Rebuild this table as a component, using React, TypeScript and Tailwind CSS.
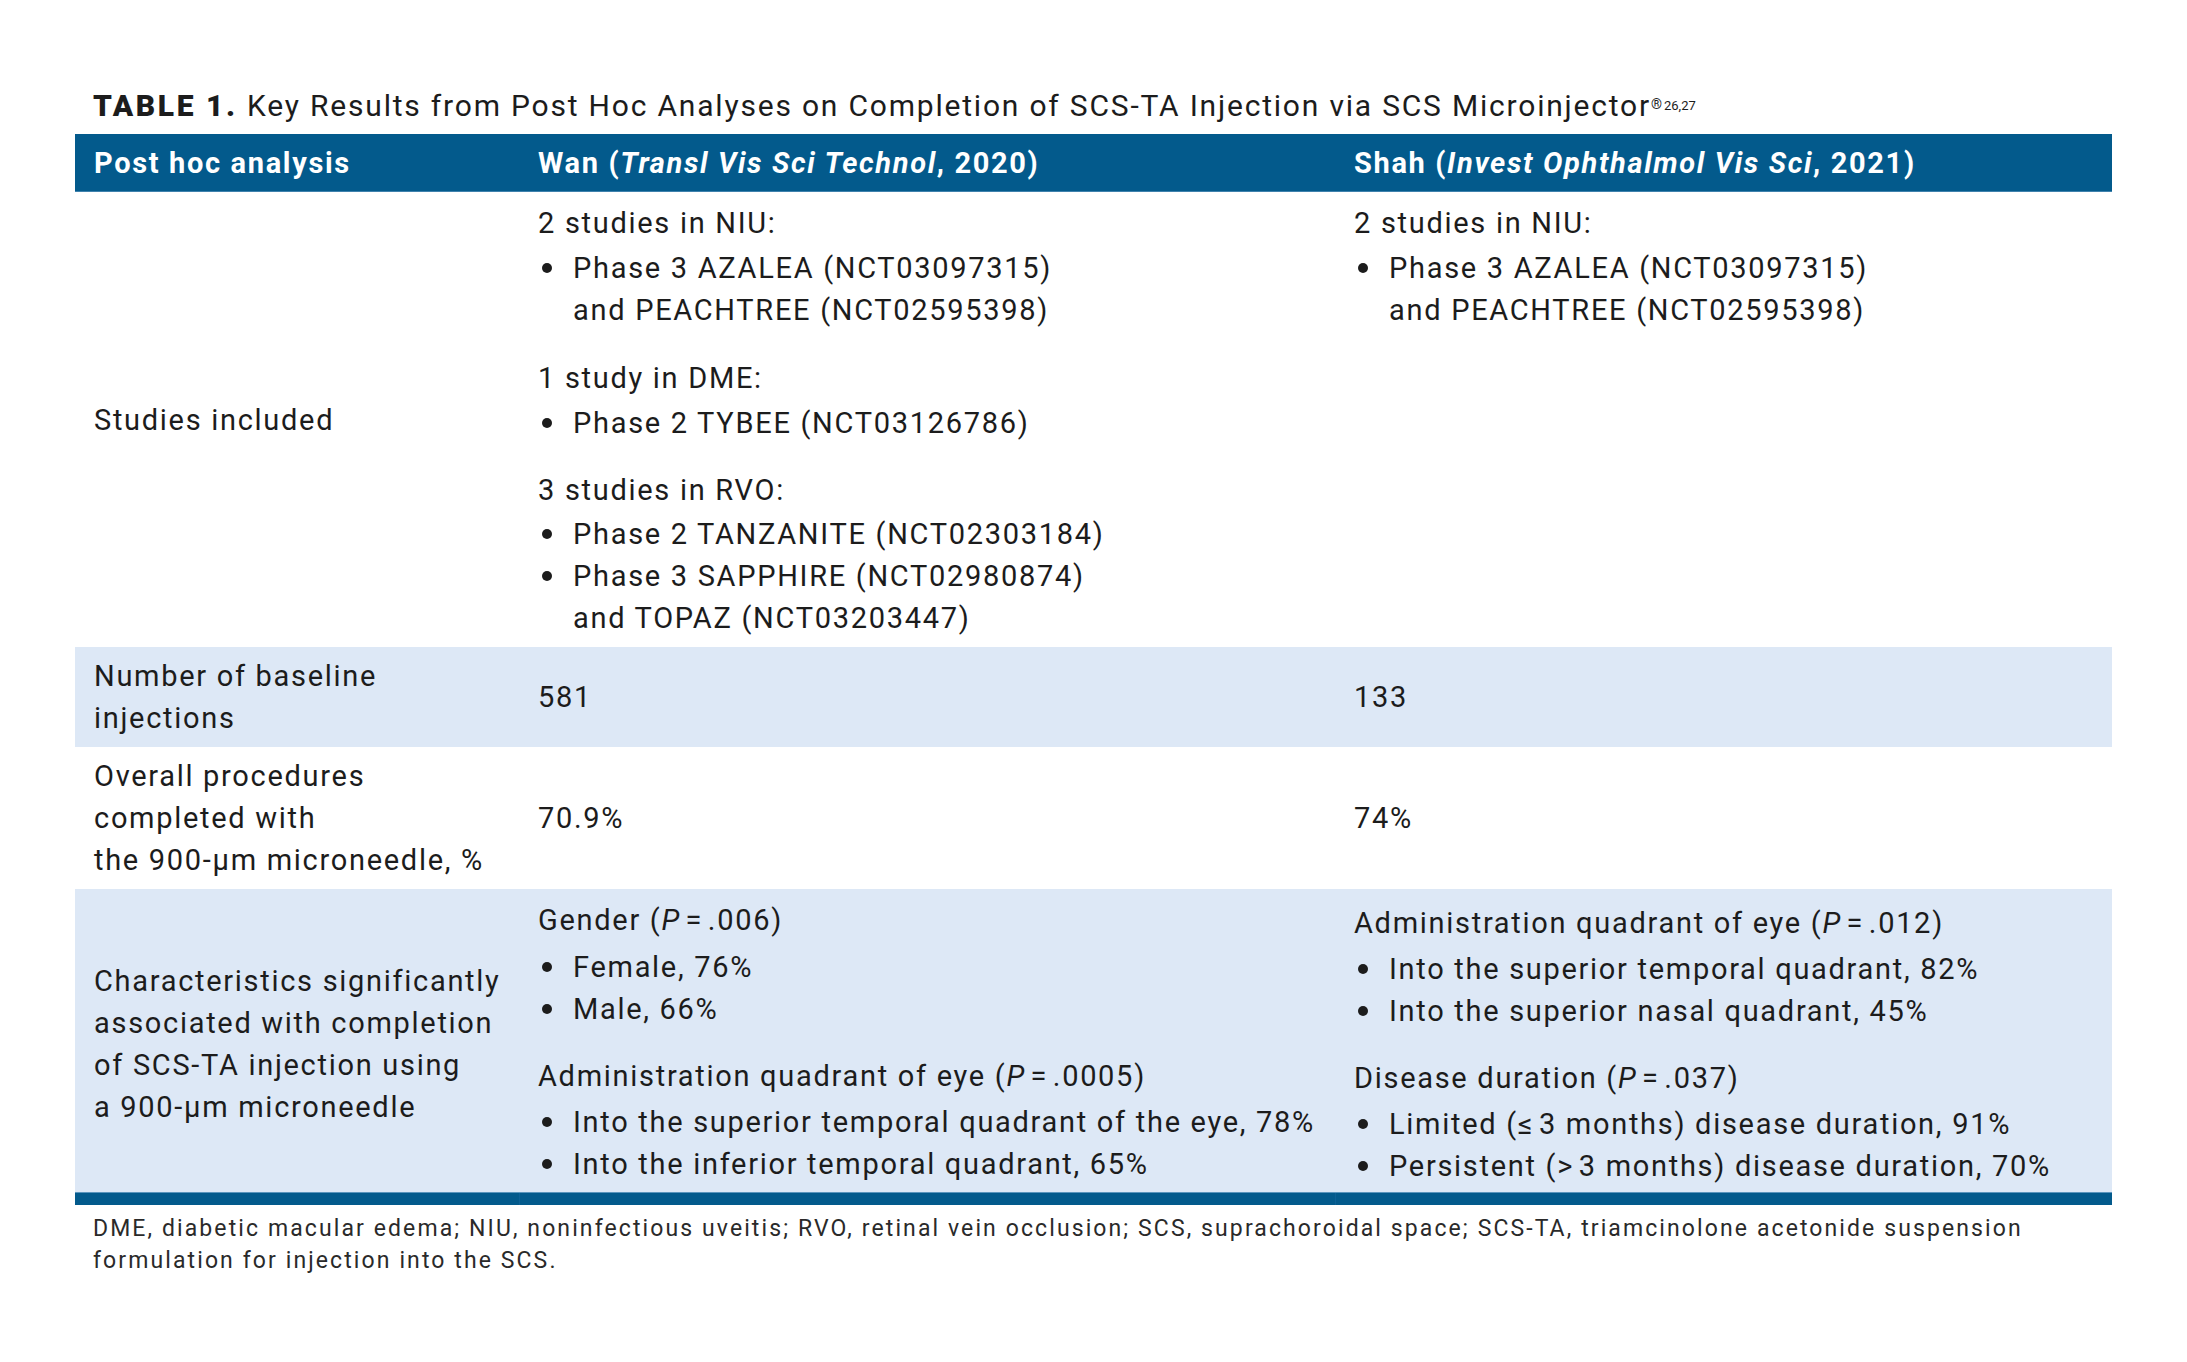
import React from "react";

const P = ({ v }: { v: string }) => (
  <>
    (<i>P</i>{"\u200A=\u200A"}{v})
  </>
);

const Bullet = ({ children }: { children: React.ReactNode }) => (
  <div className="flex">
    <span className="w-[35px] shrink-0 h-[42px] flex items-center pl-[4px]">
      <span className="block w-[10px] h-[10px] rounded-full bg-[#1c1c1c]" />
    </span>
    <span>{children}</span>
  </div>
);

export default function App() {
  return (
    <div
      className="w-[2187px] h-[1362px] bg-white text-[#1c1c1c] pt-[85px]"
      style={{ fontFamily: "Roboto, 'Noto Sans', sans-serif" }}
    >
      <div className="ml-[93px] text-[30px] leading-[42px] mb-[7px] tracking-[1.8px] whitespace-nowrap">
        <span className="font-black tracking-[2.6px]">TABLE 1.</span>{" "}
        Key Results from Post Hoc Analyses on Completion of SCS-TA Injection via SCS Microinjector
        <sup className="text-[14px] tracking-normal">®</sup>
        <sup className="text-[13px] ml-[2px] tracking-normal">26,27</sup>
      </div>

      <div className="ml-[75px] w-[2037px] text-[29px] leading-[42px] tracking-[1.7px]">
        {/* header */}
        <div className="grid grid-cols-[444px_816px_777px] h-[58px] items-center bg-[#035a8c] text-white font-bold tracking-[1.65px] border-b border-[#3f82ad]">
          <div className="pl-[19px]">Post hoc analysis</div>
          <div className="pl-[19px]">
            Wan (<i>Transl Vis Sci Technol</i>, 2020)
          </div>
          <div className="pl-[19px]">
            Shah (<i>Invest Ophthalmol Vis Sci</i>, 2021)
          </div>
        </div>

        {/* row 1 */}
        <div className="grid grid-cols-[444px_816px_777px] bg-white">
          <div className="pl-[19px] self-center">Studies included</div>
          <div className="pl-[19px] pt-[10px] pb-[8px]">
            <div className="mb-[3px]">2 studies in NIU:</div>
            <Bullet>
              Phase 3 AZALEA (NCT03097315)
              <br />
              and PEACHTREE (NCT02595398)
            </Bullet>
            <div className="mt-[26px] mb-[3px]">1 study in DME:</div>
            <Bullet>Phase 2 TYBEE (NCT03126786)</Bullet>
            <div className="mt-[25px] mb-[2px]">3 studies in RVO:</div>
            <Bullet>Phase 2 TANZANITE (NCT02303184)</Bullet>
            <Bullet>
              Phase 3 SAPPHIRE (NCT02980874)
              <br />
              and TOPAZ (NCT03203447)
            </Bullet>
          </div>
          <div className="pl-[19px] pt-[10px]">
            <div className="mb-[3px]">2 studies in NIU:</div>
            <Bullet>
              Phase 3 AZALEA (NCT03097315)
              <br />
              and PEACHTREE (NCT02595398)
            </Bullet>
          </div>
        </div>

        {/* row 2 */}
        <div className="grid grid-cols-[444px_816px_777px] h-[100px] items-center bg-[#dde8f6]">
          <div className="pl-[19px]">
            Number of baseline
            <br />
            injections
          </div>
          <div className="pl-[19px]">581</div>
          <div className="pl-[19px]">133</div>
        </div>

        {/* row 3 */}
        <div className="grid grid-cols-[444px_816px_777px] h-[142px] items-center bg-white">
          <div className="pl-[19px]">
            Overall procedures
            <br />
            completed with
            <br />
            the 900-µm microneedle, %
          </div>
          <div className="pl-[19px]">70.9%</div>
          <div className="pl-[19px]">74%</div>
        </div>

        {/* row 4 */}
        <div className="grid grid-cols-[444px_816px_777px] h-[303px] bg-[#dde8f6]">
          <div className="pl-[19px] self-center pt-[6px]">
            Characteristics significantly
            <br />
            associated with completion
            <br />
            of SCS-TA injection using
            <br />a 900-µm microneedle
          </div>
          <div className="pl-[19px] pt-[10px]">
            <div className="mb-[5px]">
              Gender <P v=".006" />
            </div>
            <Bullet>Female, 76%</Bullet>
            <Bullet>Male, 66%</Bullet>
            <div className="mt-[25px] mb-[4px]">
              Administration quadrant of eye <P v=".0005" />
            </div>
            <Bullet>Into the superior temporal quadrant of the eye, 78%</Bullet>
            <Bullet>Into the inferior temporal quadrant, 65%</Bullet>
          </div>
          <div className="pl-[19px] pt-[13px]">
            <div className="mb-[4px]">
              Administration quadrant of eye <P v=".012" />
            </div>
            <Bullet>Into the superior temporal quadrant, 82%</Bullet>
            <Bullet>Into the superior nasal quadrant, 45%</Bullet>
            <div className="mt-[25px] mb-[4px]">
              Disease duration <P v=".037" />
            </div>
            <Bullet>Limited ({"≤\u200A"}3 months) disease duration, 91%</Bullet>
            <Bullet>Persistent ({">\u200A"}3 months) disease duration, 70%</Bullet>
          </div>
        </div>

        {/* bottom bar */}
        <div className="grid grid-cols-[444px_816px_777px] h-[13px] bg-[#035a8c] border-t border-[#5b95bd]">
          <div />
          <div className="border-l border-[#0d6196]" />
          <div className="border-l border-[#0d6196]" />
        </div>
      </div>

      <div className="ml-[93px] mt-[8px] text-[23px] leading-[32px] tracking-[2.1px] text-[#2a2a2a] whitespace-nowrap">
        DME, diabetic macular edema; NIU, noninfectious uveitis; RVO, retinal vein occlusion; SCS, suprachoroidal space; SCS-TA, triamcinolone acetonide suspension
        <br />
        formulation for injection into the SCS.
      </div>
    </div>
  );
}
